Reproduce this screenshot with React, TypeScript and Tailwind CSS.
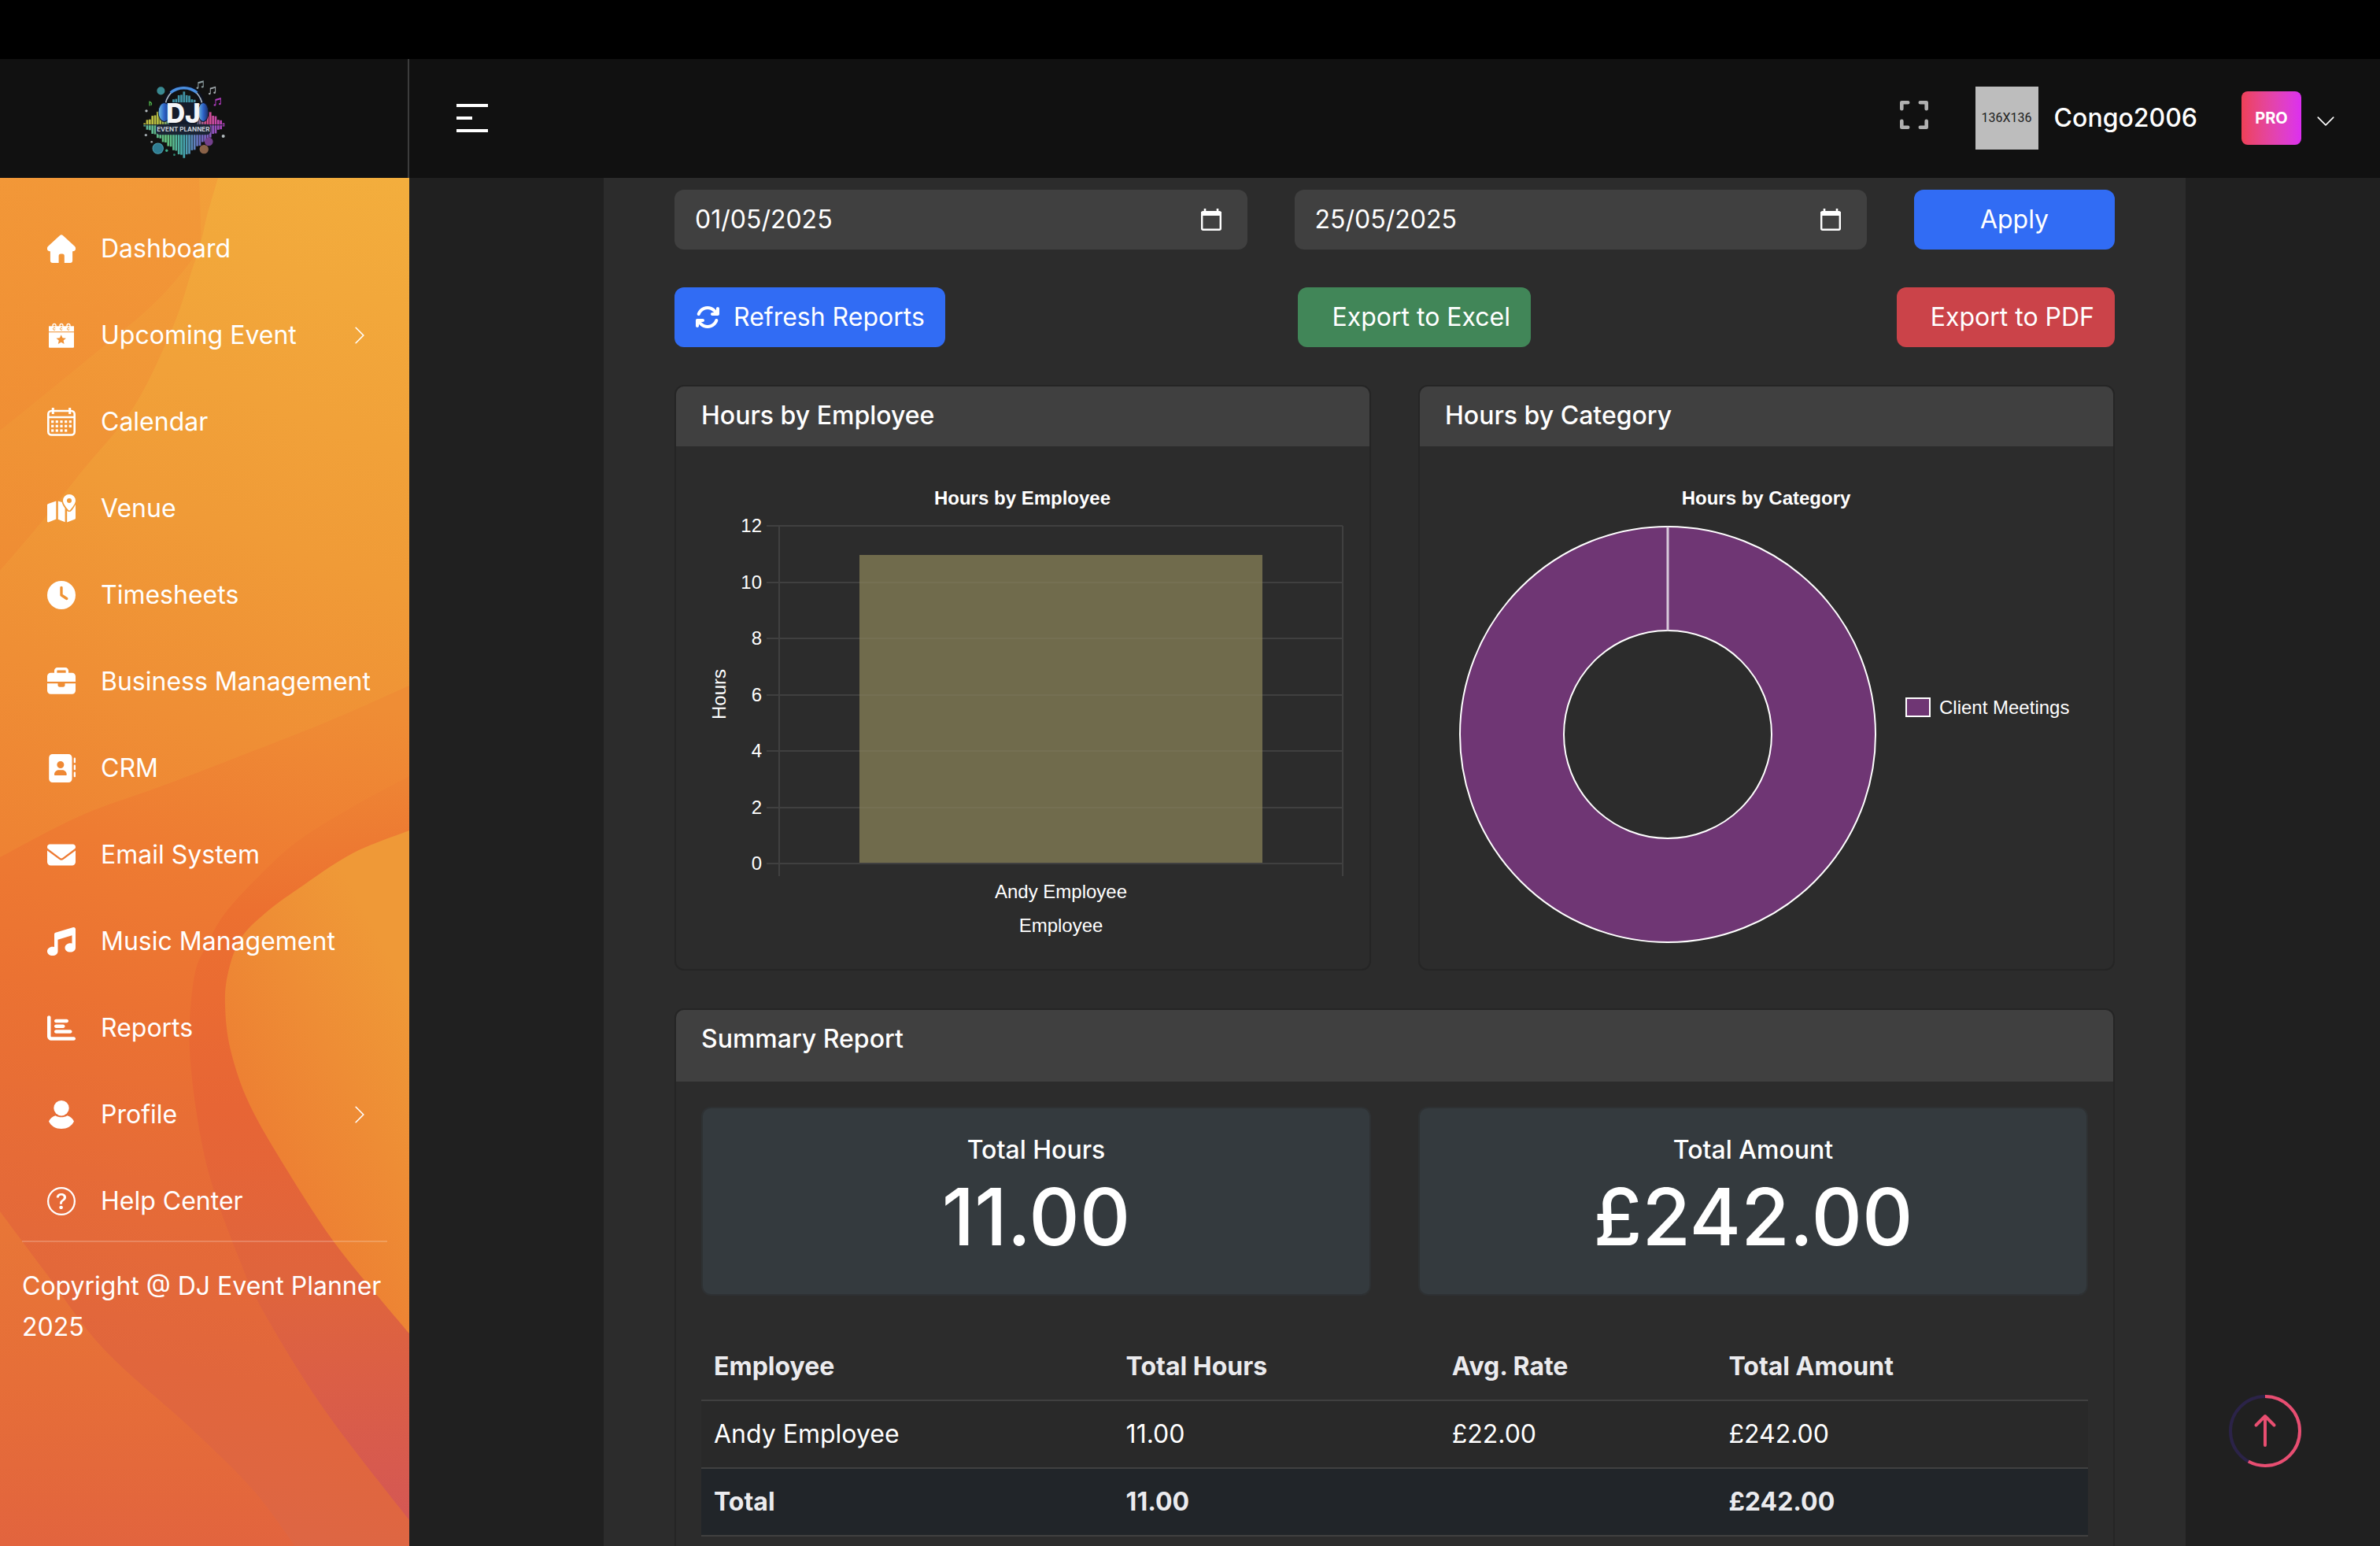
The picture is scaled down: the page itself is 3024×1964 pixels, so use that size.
import React, { useState } from 'react';
import {
  FaAddressBook,
  FaArrowsRotate,
  FaBriefcase,
  FaChartBar,
  FaClock,
  FaEnvelope,
  FaMusic
} from 'react-icons/fa6';
import { BsChevronDown, BsChevronRight, BsQuestionCircle } from 'react-icons/bs';

interface IconProps {
  className?: string;
}

const HomeIcon: React.FC<IconProps> = ({ className }) => (
  <svg viewBox="0 0 36 36" fill="currentColor" className={className}>
    <path d="M16.2 1a2.7 2.7 0 0 1 3.6 0l15 13.8c1.6 1.6 1.6 3.4.9 4.8-.6 1.1-1.7 1.6-2.9 1.6h-.7V33a3 3 0 0 1-3 3h-7.3v-9a2.5 2.5 0 0 0-2.5-2.5h-2.2a2.5 2.5 0 0 0-2.5 2.5v9H6.900a3 3 0 0 1-3-3V21.200h-.7c-1.200 0-2.300-.5-2.900-1.600-.7-1.400-.7-3.200.9-4.800z" />
  </svg>
);

const EventIcon: React.FC<IconProps> = ({ className }) => (
  <svg viewBox="0 0 36 36" className={className}>
    <path fill="currentColor" d="M2 6.3h32v6.9H2z" />
    <path
      fill="currentColor"
      fillRule="evenodd"
      d="M2 14.3h32v18.4a1 1 0 0 1-1 1H3a1 1 0 0 1-1-1zm15.7 2.9-1.8 4.1-4.4.4 3.3 2.9-1 4.4 3.9-2.3 3.9 2.3-1-4.4 3.3-2.9-4.4-.4z"
    />
    {[9, 18, 27].map(x => (
      <g key={x}>
        <path d={`M${x - 2} 7V5.5a2 2 0 0 1 4 0V7`} fill="none" stroke="currentColor" strokeWidth="1.3" />
        <path d={`M${x + 1.2} 8.8a1.5 1.5 0 1 0 0 1.8`} fill="none" stroke="#f29a38" strokeWidth="1" />
      </g>
    ))}
  </svg>
);

const CalendarIcon: React.FC<IconProps> = ({ className }) => (
  <svg viewBox="0 0 36 36" fill="none" stroke="currentColor" strokeWidth="2.6" className={className}>
    <rect x="1.3" y="4" width="33.4" height="30.5" rx="4" />
    <path d="M1 12h34" />
    <path d="M7.3 0v8M28.7 0v8" strokeWidth="3" />
    <g fill="currentColor" stroke="none">
      {[17.7, 23.3, 29].map((y, row) =>
        [6.7, 12.3, 18, 23.7, 29.3]
          .slice(0, row === 2 ? 4 : 5)
          .map(x => <rect key={`${x}-${y}`} x={x - 1.6} y={y - 1.6} width="3.2" height="3.2" />)
      )}
    </g>
  </svg>
);

const VenueIcon: React.FC<IconProps> = ({ className }) => (
  <svg viewBox="0 0 36 36" fill="currentColor" className={className}>
    <path d="M0 13.8c0-.9.5-1.6 1.3-1.9L11.3 8.4v23L1.5 35.4C.7 35.7 0 35.2 0 34.3z" />
    <path d="M13.8 8.6l4.9 1.5c.6 2.6 2.1 5.2 3.9 7.6V35.2l-8.8-3.5z" />
    <path d="M25.2 20.7c.6.8 1.3 1.4 2.8 1.4s2.2-.6 2.8-1.4c1.9-2.4 3.9-5.2 5-7.8.1.3.2.5.2.8v16.5c0 .8-.4 1.3-1.2 1.6l-9.6 3.7z" />
    <path
      fillRule="evenodd"
      d="M28 0a8 8 0 0 1 8 8c0 3.7-4.5 9.2-6.9 11.9-.6.7-1.6.7-2.2 0C24.5 17.2 20 11.7 20 8a8 8 0 0 1 8-8zm0 5a3 3 0 1 0 0 6 3 3 0 0 0 0-6z"
    />
  </svg>
);

const ProfileIcon: React.FC<IconProps> = ({ className }) => (
  <svg viewBox="0 0 36 36" fill="currentColor" className={className}>
    <circle cx="18" cy="9.7" r="9.7" />
    <path d="M2 26.5c2-3.8 5-6.4 8.5-7.2 4.5 2.7 10.5 2.7 15 0 3.5.8 6.5 3.4 8.5 7.2C31 33 25 36 18 36S5 33 2 26.5z" />
  </svg>
);

const FullscreenIcon: React.FC<IconProps> = ({ className }) => (
  <svg
    viewBox="0 0 36 36"
    fill="none"
    stroke="currentColor"
    strokeWidth="4.6"
    strokeLinecap="round"
    strokeLinejoin="round"
    className={className}
  >
    <path d="M2.3 10.2V2.3h7.9M25.8 2.3h7.9v7.9M33.7 25.8v7.9h-7.9M10.2 33.7H2.3v-7.9" />
  </svg>
);

const DateIcon: React.FC<IconProps> = ({ className }) => (
  <svg viewBox="0 0 28 28" className={className}>
    <path d="M6 0v5M22 0v5" stroke="currentColor" strokeWidth="2.6" />
    <rect x="2.2" y="4.2" width="23.6" height="22.6" rx="1.5" fill="none" stroke="currentColor" strokeWidth="2.4" />
    <path d="M1 4h26v5H1z" fill="currentColor" />
  </svg>
);

const MusicNote = ({ x, y, color }: { x: number; y: number; color: string }) => (
  <g transform={`translate(${x} ${y})`} fill={color} stroke={color}>
    <path d="M5 26V6l19-5v21M5 9l19-5" fill="none" strokeWidth="3" />
    <ellipse cx="2" cy="27" rx="4" ry="3.5" stroke="none" />
    <ellipse cx="21" cy="23" rx="4" ry="3.5" stroke="none" />
  </g>
);

const logoBars = Array.from({ length: 31 }, (_, i) => {
  const x = 67 + i * 10;
  return { x, half: Math.max(124 - Math.abs(x + 4 - 220) * 0.78 + (i % 2 ? 3 : -3), 6) };
});

const Logo: React.FC<IconProps> = ({ className }) => (
  <svg viewBox="60 55 320 305" role="img" aria-label="DJ Event Planner" className={className}>
    <defs>
      <linearGradient id="logoTop" gradientUnits="userSpaceOnUse" x1="66" y1="200" x2="373" y2="200">
        <stop offset="0" stopColor="#c0bc40" />
        <stop offset="0.22" stopColor="#b5c044" />
        <stop offset="0.35" stopColor="#3f93a6" />
        <stop offset="0.62" stopColor="#3f93a6" />
        <stop offset="0.78" stopColor="#d8508c" />
        <stop offset="1" stopColor="#b843c0" />
      </linearGradient>
      <linearGradient id="logoBottom" gradientUnits="userSpaceOnUse" x1="66" y1="260" x2="373" y2="260">
        <stop offset="0" stopColor="#5fb6a0" />
        <stop offset="0.3" stopColor="#62c07c" />
        <stop offset="0.5" stopColor="#45a8b0" />
        <stop offset="0.7" stopColor="#6a6cc0" />
        <stop offset="1" stopColor="#b040bc" />
      </linearGradient>
      <linearGradient id="logoPhones" x1="0" x2="1">
        <stop offset="0" stopColor="#6fc0e0" />
        <stop offset="0.5" stopColor="#2c62c8" />
        <stop offset="1" stopColor="#1c2c62" />
      </linearGradient>
    </defs>
    {logoBars.map(bar => (
      <g key={bar.x}>
        <rect x={bar.x} y={230 - bar.half} width="8" height={bar.half} fill="url(#logoTop)" />
        <rect x={bar.x} y="230" width="8" height={bar.half} fill="url(#logoBottom)" />
      </g>
    ))}
    <path d="M66 231h307" stroke="#14202e" strokeWidth="3" />
    <path d="M146 165c4-50 36-78 74-78s70 28 74 78" fill="none" stroke="#0d1220" strokeWidth="18" />
    <path d="M148 165c4-48 34-76 72-76s68 28 72 76" fill="none" stroke="#a9b6c4" strokeWidth="5" />
    <path d="M170 108c14-12 30-18 50-18s36 6 50 18" fill="none" stroke="#4a8fe0" strokeWidth="10" />
    <ellipse cx="146" cy="182" rx="23" ry="36" fill="url(#logoPhones)" stroke="#10182c" strokeWidth="3" />
    <ellipse cx="294" cy="182" rx="20" ry="36" fill="url(#logoPhones)" stroke="#10182c" strokeWidth="3" />
    <rect x="162" y="145" width="110" height="84" rx="8" fill="#141b2b" />
    <rect x="114" y="228" width="208" height="40" rx="14" fill="#1a2434" />
    <text x="218" y="222" textAnchor="middle" fontFamily="Inter, sans-serif" fontWeight="800" fontSize="100" fill="#f4f5f8">
      DJ
    </text>
    <text x="218" y="256" textAnchor="middle" fontFamily="Inter, sans-serif" fontWeight="700" fontSize="24" fill="#c9cfd8">
      EVENT PLANNER
    </text>
    <MusicNote x={270} y={63} color="#8f9fa2" />
    <MusicNote x={316} y={85} color="#a8b0b4" />
    <MusicNote x={336} y={128} color="#b13cc0" />
    <path d="M90 142c8 4 10 8 5 14M90 140v18" stroke="#4fae4a" strokeWidth="4" fill="none" />
    <circle cx="133" cy="101" r="15" fill="#3a8a92" />
    <circle cx="122" cy="320" r="20" fill="#2f7c92" stroke="#4aa0b0" strokeWidth="3" />
    <circle cx="315" cy="294" r="16" fill="#74408c" />
    <circle cx="297" cy="323" r="17" fill="#8a6248" />
    <circle cx="78" cy="177" r="5" fill="#b4bcc0" />
    <circle cx="76" cy="269" r="5" fill="#a0a8ac" />
    <circle cx="98" cy="295" r="4" fill="#a0a8ac" />
    <circle cx="370" cy="273" r="6" fill="#b4bcc0" />
    <circle cx="155" cy="328" r="5" fill="#3fae8a" />
    <circle cx="184" cy="344" r="4" fill="#2f8a72" />
  </svg>
);

type Point = [number, number];

// Smooth curve through the points (Catmull-Rom turned into beziers)
const curve = (points: Point[]) =>
  points.slice(1).reduce((d, p, i) => {
    const p0 = points[Math.max(i - 1, 0)];
    const p1 = points[i];
    const p3 = points[Math.min(i + 2, points.length - 1)];
    const c1 = [p1[0] + (p[0] - p0[0]) / 6, p1[1] + (p[1] - p0[1]) / 6];
    const c2 = [p[0] - (p3[0] - p1[0]) / 6, p[1] - (p3[1] - p1[1]) / 6];
    return `${d}C${c1[0]} ${c1[1]} ${c2[0]} ${c2[1]} ${p[0]} ${p[1]}`;
  }, `M${points[0][0]} ${points[0][1]}`);

const cornerInner = curve([[253, 226], [255, 280], [254, 310], [243, 346], [219, 417], [170, 517], [103, 600], [52, 664], [0, 725]]);
const cornerOuter = curve([[277, 226], [263, 274], [254, 310], [237, 339], [192, 389], [112, 456], [0, 547]]);
const band = curve([[520, 871], [413, 918], [296, 964], [207, 998], [103, 1036], [0, 1089]]);
const stripeOuter = curve([
  [520, 986], [448, 1025], [379, 1068], [331, 1111], [286, 1160], [263, 1200], [248, 1235], [241, 1298],
  [243, 1361], [255, 1445], [272, 1513], [303, 1597], [334, 1665], [413, 1792], [520, 1931]
]);
const stripeInner = curve([
  [520, 1055], [448, 1084], [379, 1129], [337, 1160], [306, 1192], [290, 1235], [286, 1277], [293, 1334],
  [317, 1403], [365, 1487], [423, 1576], [482, 1649], [520, 1694]
]);
const foot = curve([[0, 1539], [59, 1618], [131, 1713], [241, 1813], [320, 1891], [375, 1964]]);

const SidebarBackground = () => (
  <svg
    viewBox="0 226 520 1738"
    preserveAspectRatio="none"
    aria-hidden="true"
    className="absolute inset-0 h-full w-full"
  >
    <defs>
      <linearGradient id="sideBase" gradientUnits="userSpaceOnUse" x1="520" y1="226" x2="180" y2="1150">
        <stop offset="0" stopColor="#f3ae3d" />
        <stop offset="0.5" stopColor="#f09b37" />
        <stop offset="1" stopColor="#ee8233" />
      </linearGradient>
      <linearGradient id="sideCorner" gradientUnits="userSpaceOnUse" x1="0" y1="226" x2="0" y2="725">
        <stop offset="0" stopColor="#f28f36" stopOpacity="0.4" />
        <stop offset="1" stopColor="#ee8030" stopOpacity="0.35" />
      </linearGradient>
      <linearGradient id="sideBand" gradientUnits="userSpaceOnUse" x1="480" y1="900" x2="240" y2="1964">
        <stop offset="0" stopColor="#ef8d35" />
        <stop offset="0.22" stopColor="#ee7b32" />
        <stop offset="0.4" stopColor="#eb7232" />
        <stop offset="0.6" stopColor="#e66b37" />
        <stop offset="0.8" stopColor="#e1663c" />
        <stop offset="1" stopColor="#dd6645" />
      </linearGradient>
      <linearGradient id="sideFoot" gradientUnits="userSpaceOnUse" x1="60" y1="1550" x2="60" y2="1964">
        <stop offset="0" stopColor="#e87637" />
        <stop offset="0.5" stopColor="#e66e38" />
        <stop offset="1" stopColor="#e2643e" />
      </linearGradient>
      <linearGradient id="sideStripe" gradientUnits="userSpaceOnUse" x1="0" y1="990" x2="0" y2="1920">
        <stop offset="0" stopColor="#ee8434" />
        <stop offset="0.18" stopColor="#ec7030" />
        <stop offset="0.45" stopColor="#e76535" />
        <stop offset="0.7" stopColor="#df643d" />
        <stop offset="0.85" stopColor="#da5d48" />
        <stop offset="1" stopColor="#d55853" />
      </linearGradient>
      <linearGradient id="sidePetal" gradientUnits="userSpaceOnUse" x1="300" y1="1380" x2="520" y2="1260">
        <stop offset="0" stopColor="#ed8033" />
        <stop offset="1" stopColor="#ef9937" />
      </linearGradient>
    </defs>
    <path fill="url(#sideBase)" d="M0 226h520v1738H0z" />
    <path fill="url(#sideCorner)" d={`${cornerInner}V226z`} />
    <path fill="url(#sideCorner)" d={`${cornerOuter}V226z`} />
    <path fill="url(#sideBand)" d={`${band}V1964H520z`} />
    <path fill="url(#sideStripe)" d={`${stripeOuter}z`} />
    <path fill="url(#sidePetal)" d={`${stripeInner}z`} />
    <path fill="url(#sideFoot)" d={`${foot}H0z`} />
  </svg>
);

const navItems = [
  { label: 'Dashboard', icon: HomeIcon },
  { label: 'Upcoming Event', icon: EventIcon, hasChildren: true },
  { label: 'Calendar', icon: CalendarIcon },
  { label: 'Venue', icon: VenueIcon },
  { label: 'Timesheets', icon: FaClock },
  { label: 'Business Management', icon: FaBriefcase },
  { label: 'CRM', icon: FaAddressBook },
  { label: 'Email System', icon: FaEnvelope },
  { label: 'Music Management', icon: FaMusic },
  { label: 'Reports', icon: FaChartBar },
  { label: 'Profile', icon: ProfileIcon, hasChildren: true },
  { label: 'Help Center', icon: BsQuestionCircle }
];

const Sidebar = () => (
  <aside className="relative w-[520px] shrink-0 overflow-hidden">
    <SidebarBackground />
    <div className="relative">
      <nav className="flex flex-col gap-9 pt-[53px] pl-[60px] pr-[50px]">
        {navItems.map(({ label, icon: Icon, hasChildren }) => (
          <a key={label} href="#" className="flex h-[74px] items-center whitespace-nowrap">
            <Icon className="mr-8 size-9 shrink-0" />
            {label}
            {hasChildren && <BsChevronRight className="ml-auto size-[26px]" />}
          </a>
        ))}
      </nav>
      <hr className="mx-7 mt-[13px] border-t-2 border-white/20" />
      <p className="mx-7 mt-[30px] leading-[52px]">Copyright @ DJ Event Planner 2025</p>
    </div>
  </aside>
);

const Header = () => (
  <header className="flex h-[151px] shrink-0 bg-[#111111]">
    <div className="flex w-[520px] shrink-0 items-center justify-center border-r-2 border-[#3c3c3c] pr-[52px]">
      <Logo className="h-[102px] w-[107px]" />
    </div>
    <div className="flex flex-1 items-center justify-between pl-[60px] pr-14 pb-[2px]">
      <button type="button" aria-label="Toggle menu" className="flex flex-col gap-3">
        <span className="h-1 w-10 bg-white" />
        <span className="h-1 w-5 bg-white" />
        <span className="h-1 w-10 bg-white" />
      </button>
      <div className="flex items-center">
        <button type="button" aria-label="Fullscreen" className="mr-[60px] mb-2">
          <FullscreenIcon className="size-9 text-[#b0b0b0]" />
        </button>
        <div className="mr-5 flex size-20 items-center justify-center bg-[#bdbdbd] font-['Roboto'] text-[16px] text-[#222222]">
          136X136
        </div>
        <span className="mr-14 font-medium">Congo2006</span>
        <span className="mr-[18px] flex h-[68px] w-[76px] items-center justify-center rounded-lg bg-linear-to-r from-[#ee4056] to-[#dc2ef0] text-[20px] font-bold">
          PRO
        </span>
        <button type="button" aria-label="Account menu" className="mt-2">
          <BsChevronDown className="size-[26px]" />
        </button>
      </div>
    </div>
  </header>
);

interface DateFieldProps {
  label: string;
  value: string;
  onChange: (value: string) => void;
}

const DateField: React.FC<DateFieldProps> = ({ label, value, onChange }) => (
  <label className="col-span-5 flex h-[76px] items-center rounded-xl bg-[#404040] px-[26px]">
    <input
      type="text"
      aria-label={label}
      value={value}
      onChange={e => onChange(e.target.value)}
      className="min-w-0 flex-1 bg-transparent outline-none"
    />
    <DateIcon className="mr-[6px] size-7" />
  </label>
);

const ticks = [12, 10, 8, 6, 4, 2, 0];

const BarChart = () => (
  <svg viewBox="0 0 817 600" className="w-full font-['Liberation_Sans']" fontSize="24" fill="#ffffff">
    <text x="408" y="42" textAnchor="middle" fontWeight="700">
      Hours by Employee
    </text>
    {ticks.map((tick, i) => (
      <g key={tick}>
        <path d={`M83 ${Math.round(69 + i * 71.5)}h732`} stroke="#404040" strokeWidth="2" />
        <text x="77" y={Math.round(77 + i * 71.5)} textAnchor="end">
          {tick}
        </text>
      </g>
    ))}
    <path d="M99 69v445M815 69v445" stroke="#404040" strokeWidth="2" />
    <rect x="201" y="106" width="512" height="391" fill="#706b4c" />
    {ticks.slice(1, 6).map((tick, i) => (
      <path key={tick} d={`M201 ${Math.round(140.5 + i * 71.5)}h512`} stroke="#757053" strokeWidth="2" />
    ))}
    <text transform="translate(31 283) rotate(-90)" textAnchor="middle">
      Hours
    </text>
    <text x="457" y="542" textAnchor="middle">
      Andy Employee
    </text>
    <text x="457" y="585" textAnchor="middle">
      Employee
    </text>
  </svg>
);

const DoughnutChart = () => (
  <svg viewBox="0 0 817 600" className="w-full font-['Liberation_Sans']" fontSize="24" fill="#ffffff">
    <text x="408" y="42" textAnchor="middle" fontWeight="700">
      Hours by Category
    </text>
    <circle cx="283" cy="334" r="198" fill="none" stroke="#6f3674" strokeWidth="132" />
    <circle cx="283" cy="334" r="264" fill="none" stroke="#ffffff" strokeWidth="2" />
    <circle cx="283" cy="334" r="132" fill="none" stroke="#ffffff" strokeWidth="2" />
    <path d="M283 70v132" stroke="#d8c8da" strokeWidth="3" />
    <rect x="586" y="288" width="30" height="23" fill="#6f3674" stroke="#ffffff" strokeWidth="2" />
    <text x="628" y="308">
      Client Meetings
    </text>
  </svg>
);

const ChartCard = ({ title, children }: { title: string; children: React.ReactNode }) => (
  <section className="overflow-hidden rounded-xl border-2 border-[#252525]">
    <h2 className="h-[76px] bg-[#404040] px-8 pt-[18px] leading-[38px] font-medium">{title}</h2>
    <div className="p-8">{children}</div>
  </section>
);

const StatCard = ({ label, value }: { label: string; value: string }) => (
  <div className="h-[240px] rounded-xl border-2 border-[#2e3133] bg-[#343a3e] pt-[34px] text-center font-medium">
    <p className="leading-[38px]">{label}</p>
    <p className="text-[100px] leading-[132px]">{value}</p>
  </div>
);

const SummaryTable = () => (
  <table className="mt-12 w-full text-left leading-[52px]">
    <thead>
      <tr className="border-b-2 border-[#404040] text-[#ebebee]">
        <th className="px-4 py-4 font-bold">Employee</th>
        <th className="px-4 py-4 font-bold">Total Hours</th>
        <th className="px-4 py-4 font-bold">Avg. Rate</th>
        <th className="px-4 py-4 font-bold">Total Amount</th>
      </tr>
    </thead>
    <tbody>
      <tr className="border-b-2 border-[#404040] bg-[#292929]">
        <td className="px-4 py-4">Andy Employee</td>
        <td className="px-4 py-4">11.00</td>
        <td className="px-4 py-4">£22.00</td>
        <td className="px-4 py-4">£242.00</td>
      </tr>
      <tr className="border-b-2 border-[#404040] bg-[#212529] font-bold text-[#ebebee]">
        <td className="px-4 py-4">Total</td>
        <td className="px-4 py-4">11.00</td>
        <td className="px-4 py-4"></td>
        <td className="px-4 py-4">£242.00</td>
      </tr>
    </tbody>
  </table>
);

const ScrollTopButton = () => (
  <button type="button" aria-label="Back to top" className="fixed right-25 bottom-25 text-[#e84e70]">
    <svg viewBox="0 0 92 92" fill="none" strokeWidth="4" className="size-[92px]">
      <circle cx="46" cy="46" r="44" stroke="#2b2348" />
      <circle
        cx="46"
        cy="46"
        r="44"
        pathLength="100"
        stroke="currentColor"
        strokeDasharray="58 42"
        transform="rotate(-90 46 46)"
      />
      <path d="M46 64V27M34.5 38.5 46 27l11.5 11.5" stroke="currentColor" strokeLinecap="round" strokeLinejoin="round" />
    </svg>
  </button>
);

const App = () => {
  const [startDate, setStartDate] = useState('01/05/2025');
  const [endDate, setEndDate] = useState('25/05/2025');

  return (
    <div className="flex h-screen flex-col overflow-hidden bg-[#202020] pt-[75px] font-['Inter',sans-serif] text-[32px] leading-[48px] text-white shadow-[inset_0_75px_0_#000000]">
      <Header />
      <div className="flex min-h-0 flex-1">
        <Sidebar />
        <main className="flex-1 overflow-hidden">
          <div className="mx-auto min-h-full max-w-[2010px] bg-[#2c2c2c] px-[90px] pt-[15px]">
            <form className="grid grid-cols-12 gap-[60px]" onSubmit={e => e.preventDefault()}>
              <DateField label="Start date" value={startDate} onChange={setStartDate} />
              <DateField label="End date" value={endDate} onChange={setEndDate} />
              <button type="submit" className="col-span-2 h-[76px] rounded-xl bg-[#316cf4]">
                Apply
              </button>
            </form>

            <div className="mt-12 flex justify-between">
              <button type="button" className="flex h-[76px] items-center rounded-xl bg-[#316cf4] px-[26px]">
                <FaArrowsRotate className="mr-[17px] size-8" />
                Refresh Reports
              </button>
              <button type="button" className="mr-4 h-[76px] rounded-xl bg-[#418658] pl-[43px] pr-[26px]">
                Export to Excel
              </button>
              <button type="button" className="h-[76px] rounded-xl bg-[#cb4349] pl-[43px] pr-[26px]">
                Export to PDF
              </button>
            </div>

            <div className="mt-12 grid grid-cols-2 gap-[60px]">
              <ChartCard title="Hours by Employee">
                <BarChart />
              </ChartCard>
              <ChartCard title="Hours by Category">
                <DoughnutChart />
              </ChartCard>
            </div>

            <section className="mt-12 overflow-hidden rounded-t-xl border-2 border-b-0 border-[#252525]">
              <h2 className="h-[91px] bg-[#404040] px-8 pt-[18px] leading-[38px] font-medium">Summary Report</h2>
              <div className="p-8">
                <div className="grid grid-cols-2 gap-[60px]">
                  <StatCard label="Total Hours" value="11.00" />
                  <StatCard label="Total Amount" value="£242.00" />
                </div>
                <SummaryTable />
              </div>
            </section>
          </div>
        </main>
      </div>
      <ScrollTopButton />
    </div>
  );
};

export default App;
